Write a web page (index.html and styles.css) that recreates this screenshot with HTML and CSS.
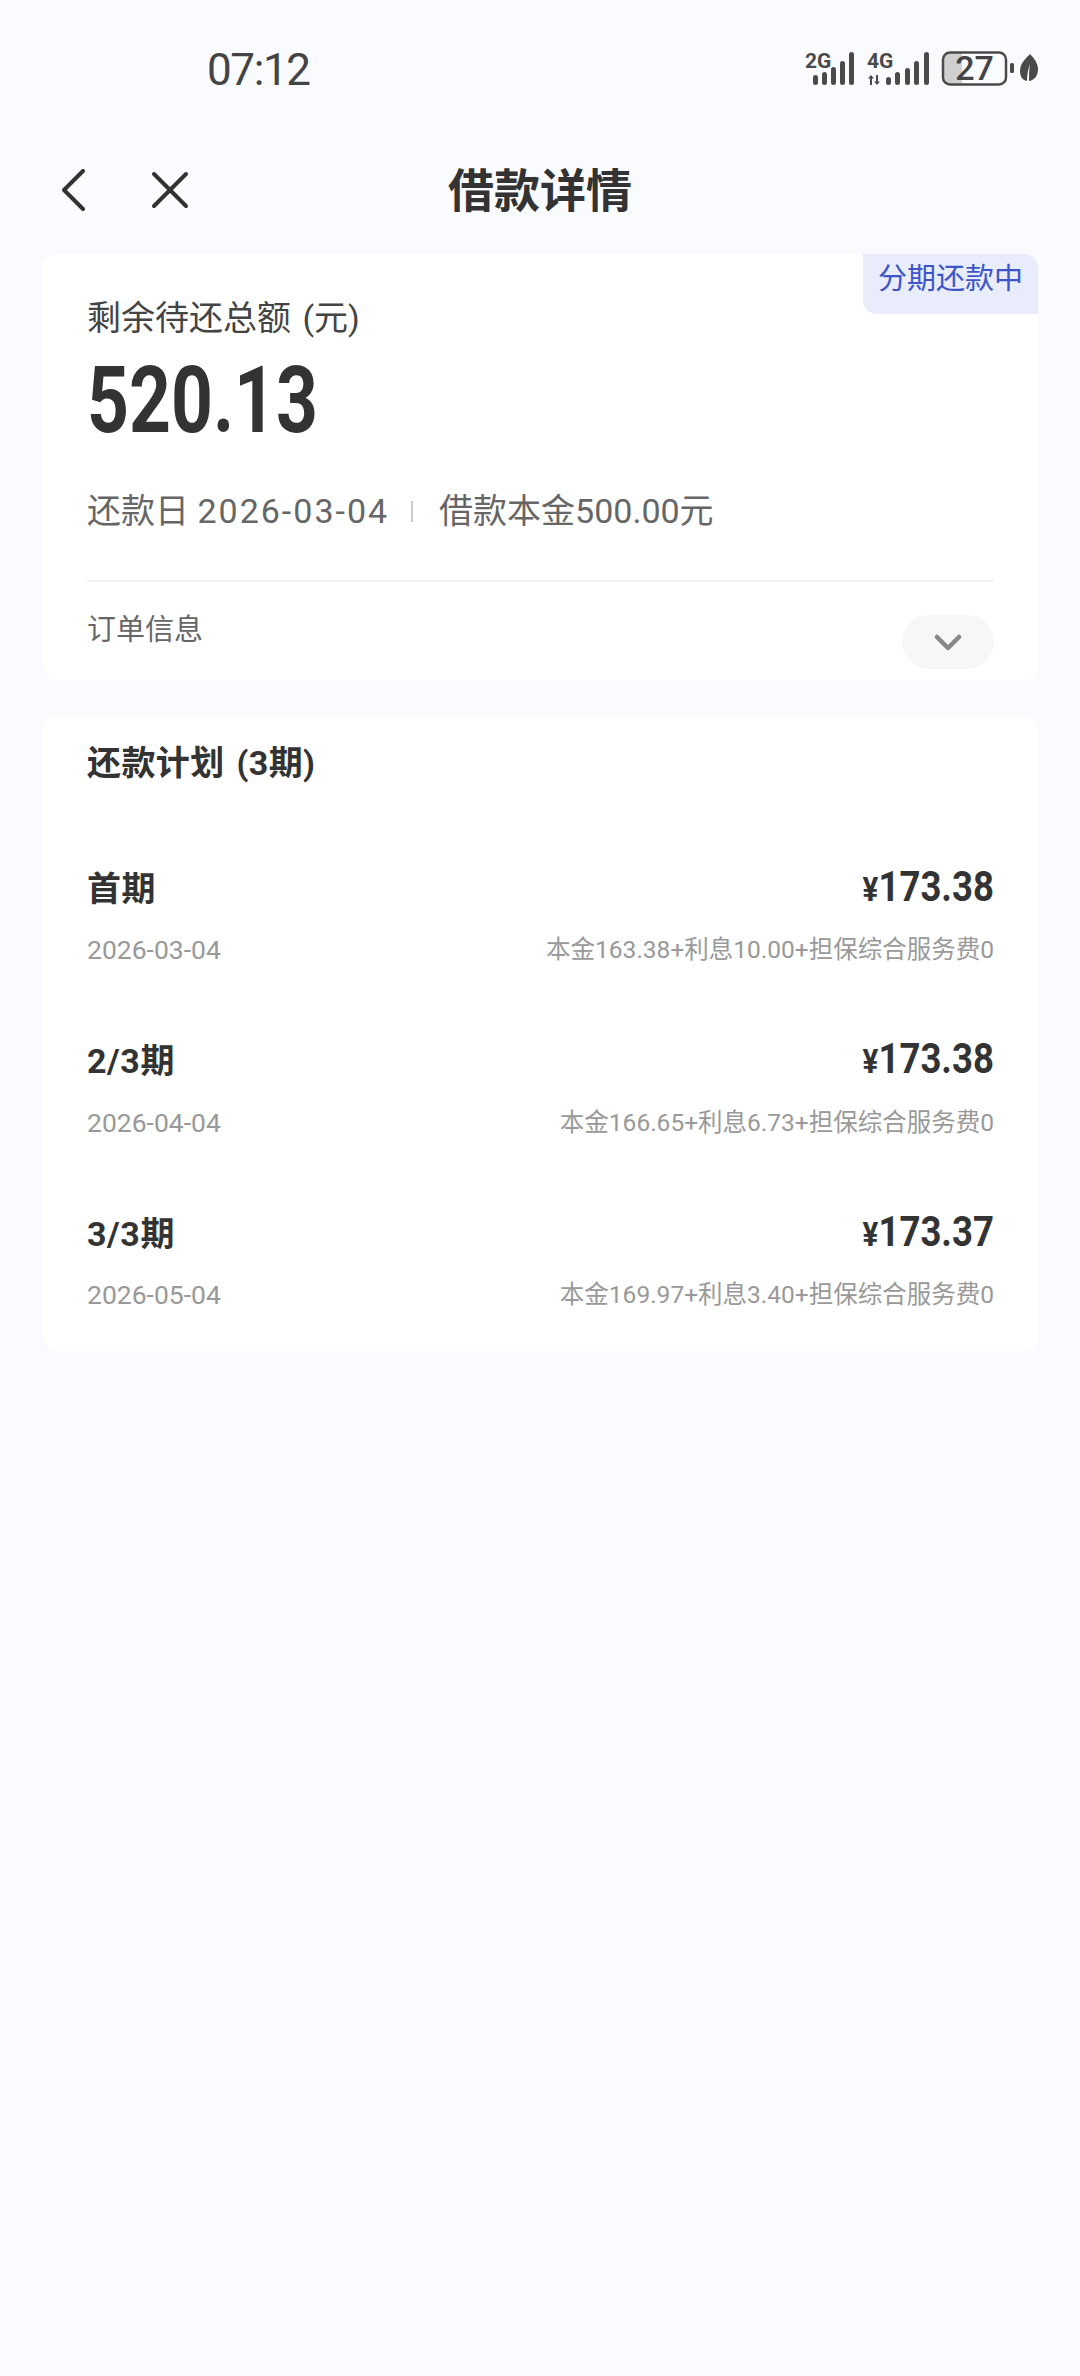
FILE: index.html
```html
<!DOCTYPE html>
<html lang="zh-CN">
<head>
<meta charset="utf-8">
<title>借款详情</title>
<link rel="stylesheet" href="styles.css">
</head>
<body>
<div class="statusbar">
  <span class="time">07:12</span>
  <svg class="status-icons" width="240" height="60" viewBox="800 40 240 60">
    <g fill="#4a4a4a">
      <text x="804" y="68" class="net">2G</text>
      <rect x="812" y="75" width="5" height="10" rx="2.5"/>
      <rect x="821" y="72" width="5" height="13" rx="2.5"/>
      <rect x="830" y="67" width="5" height="18" rx="2.5"/>
      <rect x="839" y="61" width="5" height="24" rx="2.5"/>
      <rect x="848" y="52" width="5" height="33" rx="2.5"/>
      <text x="866" y="68" class="net">4G</text>
      <path d="M870 75l-3 3.500h2v6.500h2v-6.500h2zM876 85l3-3.500h-2v-6.500h-2v6.500h-2z"/>
      <rect x="885" y="77" width="5" height="8" rx="2.500"/>
      <rect x="894" y="72" width="5" height="13" rx="2.500"/>
      <rect x="904" y="68" width="5" height="17" rx="2.500"/>
      <rect x="913" y="61" width="5" height="24" rx="2.500"/>
      <rect x="923" y="52" width="5" height="33" rx="2.500"/>
    </g>
    <path d="M949 52.500h12v32h-12a7 7 0 0 1-7-7v-18a7 7 0 0 1 7-7z" fill="#d0d0d0"/>
    <rect x="942" y="52.500" width="63" height="32" rx="7" fill="none" stroke="#4a4a4a" stroke-width="2.500"/>
    <text x="973.500" y="80" class="batt" text-anchor="middle">27</text>
    <rect x="1009" y="63" width="4" height="10" rx="1.500" fill="#4a4a4a"/>
    <path d="M1029 54c5 5 8 10 8 15 0 6-3 11-9 12 0-6 0-11 1-17-2 5-3 11-3 17-5-1-7-5-7-10 0-7 5-12 10-17z" fill="#4a4a4a"/>
  </svg>
</div>

<header class="nav">
  <div class="nav-icons">
    <svg class="icon-back" width="24" height="42" viewBox="0 0 24 42"><path d="M22 2 3 21l19 19" fill="none" stroke="#333" stroke-width="4" stroke-linecap="round" stroke-linejoin="round"/></svg>
    <svg class="icon-close" width="38" height="38" viewBox="0 0 38 38"><path d="M3 3l32 32M35 3 3 35" fill="none" stroke="#333" stroke-width="4" stroke-linecap="round"/></svg>
  </div>
  <h1 class="title">借款详情</h1>
  <div></div>
</header>

<main class="content">
  <section class="card summary">
    <span class="tag">分期还款中</span>
    <div class="summary-label">剩余待还总额 (元)</div>
    <div class="summary-amount">520.13</div>
    <div class="summary-meta">
      <span>还款日 <span class="date">2026-03-04</span></span>
      <i class="sep"></i>
      <span>借款本金500.00元</span>
    </div>
    <div class="order">
      <span class="order-label">订单信息</span>
      <span class="pill">
        <svg width="28" height="17" viewBox="0 0 28 17"><path d="M3 3l11 11L25 3" fill="none" stroke="#888" stroke-width="4.500" stroke-linecap="round" stroke-linejoin="round"/></svg>
      </span>
    </div>
  </section>

  <section class="card plan">
    <h2 class="plan-title">还款计划 (3期)</h2>
    <div class="plan-row">
      <div class="row-top"><span class="period">首期</span><span class="money"><small>¥</small>173.38</span></div>
      <div class="row-bottom"><span class="row-date">2026-03-04</span><span class="row-detail">本金163.38+利息10.00+担保综合服务费0</span></div>
    </div>
    <div class="plan-row">
      <div class="row-top"><span class="period">2/3期</span><span class="money"><small>¥</small>173.38</span></div>
      <div class="row-bottom"><span class="row-date">2026-04-04</span><span class="row-detail">本金166.65+利息6.73+担保综合服务费0</span></div>
    </div>
    <div class="plan-row">
      <div class="row-top"><span class="period">3/3期</span><span class="money"><small>¥</small>173.37</span></div>
      <div class="row-bottom"><span class="row-date">2026-05-04</span><span class="row-detail">本金169.97+利息3.40+担保综合服务费0</span></div>
    </div>
  </section>
</main>
</body>
</html>
```
FILE: styles.css
```css
* { box-sizing: border-box; }
html, body { margin: 0; padding: 0; }
body {
  width: 1080px;
  height: 2376px;
  overflow: hidden;
  background: #fafbff;
  color: #333;
  font-family: Roboto, "Noto Sans CJK SC", sans-serif;
}
.statusbar {
  height: 140px;
  display: flex;
  align-items: center;
  justify-content: space-between;
  padding: 0 39px 0 207px;
}
.time { font-size: 44px; letter-spacing: -1.400px; color: #444; line-height: 1; }
.status-icons { display: block; }
.net { font: 700 21px Roboto, sans-serif; }
.batt { font: 500 34px Roboto, sans-serif; fill: #444; }

.nav {
  height: 114px;
  display: grid;
  grid-template-columns: 1fr auto 1fr;
  align-items: center;
}
.nav-icons { display: flex; align-items: center; gap: 66px; padding: 0 0 14px 61px; }
.title { margin: 0; font-size: 46px; font-weight: 700; line-height: 1; padding-bottom: 12px; }

.content { padding: 0 42px 0 43px; display: flex; flex-direction: column; gap: 37px; }
.card { background: #fff; border-radius: 14px; position: relative; padding: 0 44px; }

.summary { height: 426px; padding-top: 44px; }
.tag {
  position: absolute;
  top: 0;
  right: 0;
  width: 175px;
  height: 60px;
  padding-top: 7px;
  text-align: center;
  background: #e8ecfb;
  color: #3d55c8;
  font-size: 29px;
  line-height: 36px;
  border-radius: 0 14px 0 14px;
}
.summary-label { font-size: 34px; line-height: 40px; color: #444; word-spacing: 3px; }
.summary-amount {
  font-weight: 700;
  font-size: 92px;
  line-height: 100px;
  margin-top: 13px;
  color: #333;
  transform: scaleX(.795);
  transform-origin: left center;
}
.summary-meta {
  display: flex;
  align-items: center;
  margin-top: 38px;
  font-size: 34px;
  line-height: 44px;
  color: #666;
}
.date { letter-spacing: 2px; }
.sep { width: 2px; height: 21px; background: #ccc; margin: 0 26px 0 22px; }
.order {
  margin-top: 47px;
  border-top: 2px solid #f2f2f2;
  display: flex;
  justify-content: space-between;
  align-items: flex-start;
  padding-top: 28px;
}
.order-label { font-size: 29px; line-height: 40px; color: #666; }
.pill {
  width: 92px;
  height: 54px;
  margin-top: 5px;
  border-radius: 27px;
  background: #f7f7f7;
  display: flex;
  align-items: center;
  justify-content: center;
}
.plan { height: 634px; padding-top: 24px; }
.plan-title { margin: 0 0 55px; font-size: 34px; font-weight: 700; line-height: 44px; word-spacing: 3px; letter-spacing: .4px; }
.plan-row { height: 172.500px; padding-top: 24px; }
.row-top { display: flex; justify-content: space-between; align-items: center; height: 44px; }
.period { font-size: 34px; font-weight: 700; color: #333; letter-spacing: .6px; }
.money {
  display: inline-block;
  font-weight: 700;
  font-size: 42px;
  color: #333;
  transform: scaleX(.87);
  transform-origin: right center;
}
.money small { font-size: 34px; }
.row-bottom {
  display: flex;
  justify-content: space-between;
  align-items: center;
  margin-top: 24px;
  line-height: 36px;
  color: #999;
}
.row-date { font-size: 26.500px; }
.row-detail { font-size: 24.500px; }
```
